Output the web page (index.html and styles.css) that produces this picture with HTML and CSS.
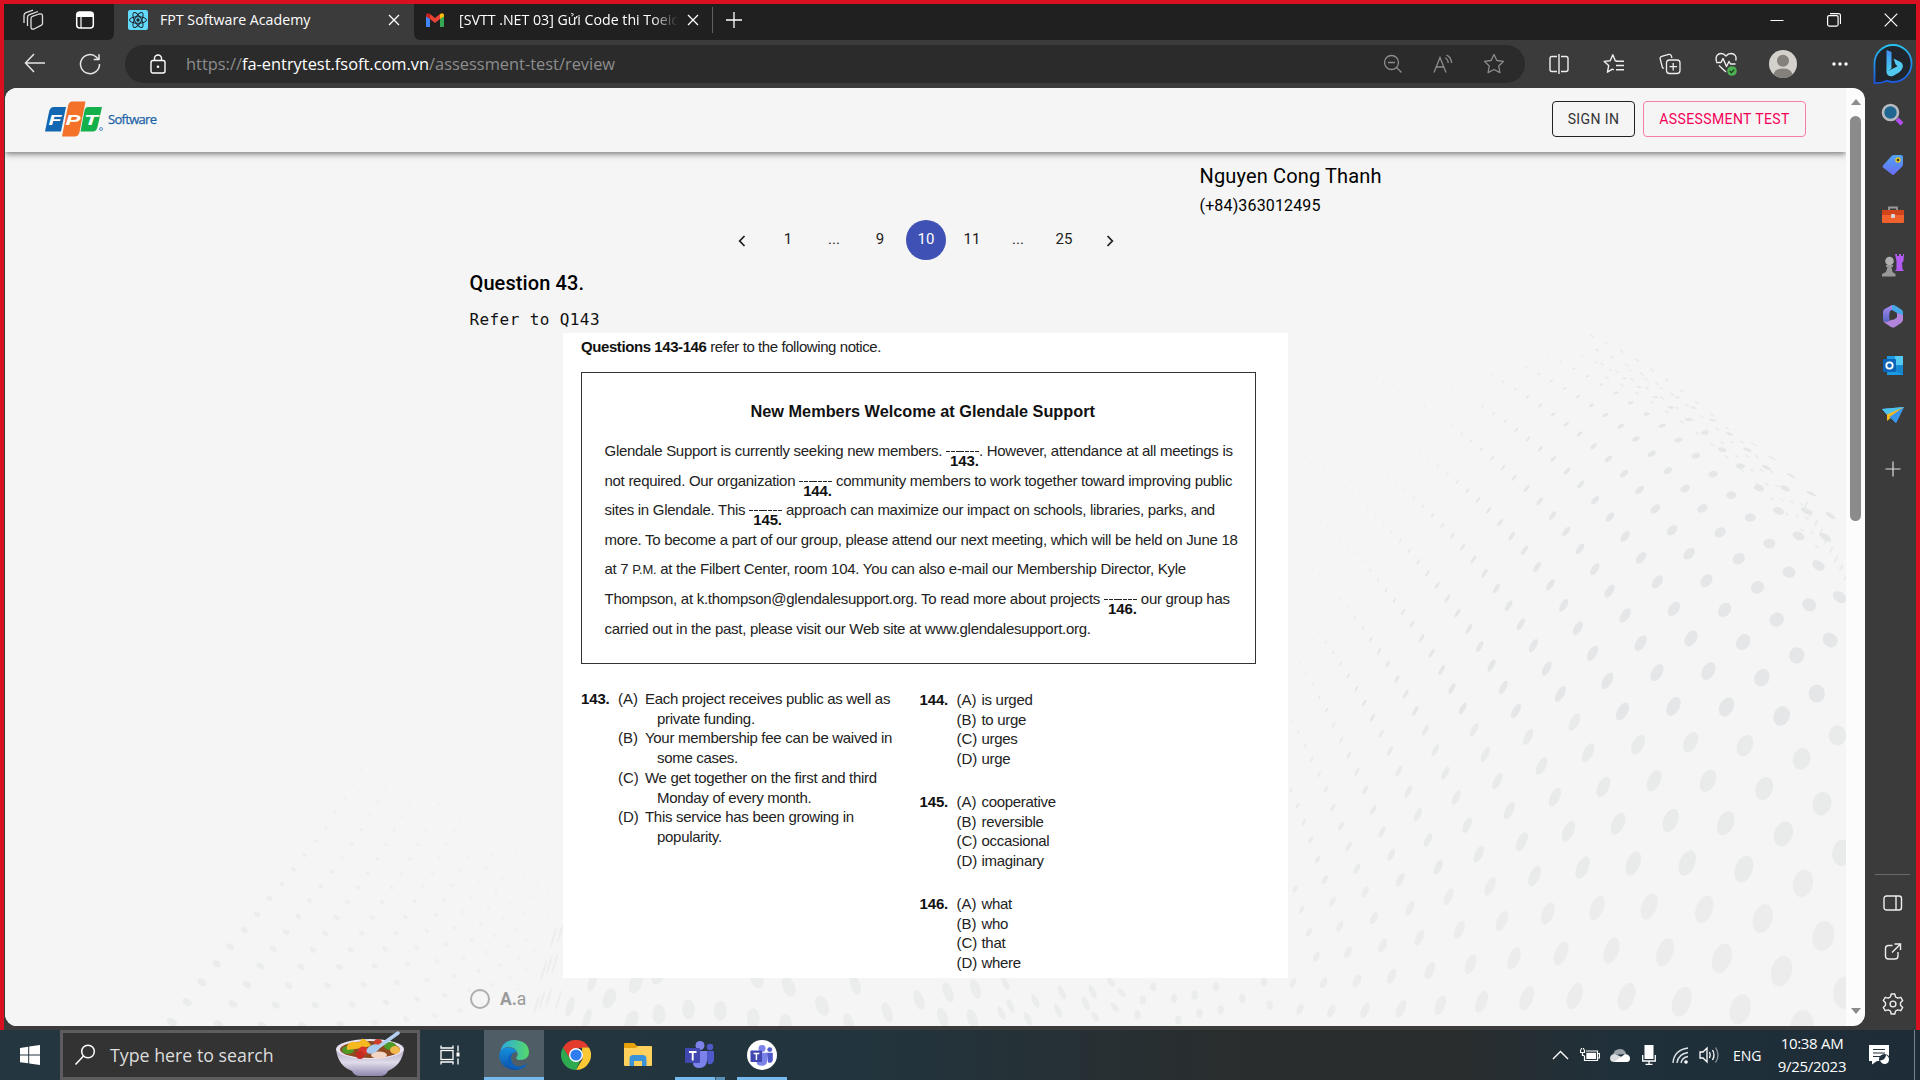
FILE: index.html
```html
<!DOCTYPE html>
<html lang="en">
<head>
<meta charset="utf-8">
<title>FPT Software Academy</title>
<link rel="stylesheet" href="styles.css">
</head>
<body>
<div class="browser">
  <div class="tabstrip">
    <div class="strip-left">
      <svg class="i" width="22" height="22" viewBox="0 0 22 22"><g fill="none" stroke="#ddd" stroke-width="1.3" stroke-linejoin="round"><path d="M9 9.500Q9 8 10.500 7.400L17 5q3.500-.8 3.500 2v7.500q0 1-1 1.700L12 20q-3 .8-3-2z"/><path d="M5.500 17V8.500q0-2 2-2.800L16 2.500M2 14V6.500q0-2 2-2.800L11 1.200"/></g></svg>
      <svg class="i" width="20" height="20" viewBox="0 0 20 20"><rect x="1.700" y="2" width="16.600" height="16" rx="3" fill="none" stroke="#fff" stroke-width="1.500"/><path d="M2 7V4.500Q2 2 4.500 2h11Q18 2 18 4.500V7z" fill="#fff"/><path d="M6 7v11" stroke="#fff" stroke-width="1.200"/></svg>
    </div>
    <div class="tab active">
      <svg width="20" height="20" viewBox="0 0 20 20"><rect width="20" height="20" rx="2" fill="#61dafb"/><g fill="none" stroke="#20232a" stroke-width="1"><ellipse cx="10" cy="10" rx="8.500" ry="3.300"/><ellipse cx="10" cy="10" rx="8.500" ry="3.300" transform="rotate(60 10 10)"/><ellipse cx="10" cy="10" rx="8.500" ry="3.300" transform="rotate(120 10 10)"/></g><circle cx="10" cy="10" r="1.700" fill="#20232a"/></svg>
      <span class="tab-title t1">FPT Software Academy</span>
      <svg width="12" height="12" viewBox="0 0 12 12"><path d="m1 1 10 10M11 1 1 11" stroke="#fff" stroke-width="1.300"/></svg>
    </div>
    <div class="tab idle">
      <svg width="18" height="14" viewBox="0 0 18 14"><path fill="#4285f4" d="M0 2v11q0 1 1 1h3V6z"/><path fill="#34a853" d="M18 2v11q0 1-1 1h-3V6z"/><path fill="#ea4335" d="M4 1 9 5l5-4v5L9 10 4 6z"/><path fill="#c5221f" d="M0 2q.5-3 4-1v5L0 3.500z"/><path fill="#fbbc04" d="M18 2q-.5-3-4-1v5l4-2.500z"/></svg>
      <span class="tab-title t2">[SVTT .NET 03] Gửi Code thi Toeic</span>
      <svg width="12" height="12" viewBox="0 0 12 12"><path d="m1 1 10 10M11 1 1 11" stroke="#fff" stroke-width="1.300"/></svg>
      <i class="tab-sep"></i>
    </div>
    <svg class="newtab" width="18" height="18" viewBox="0 0 18 18"><path d="M9 1v16M1 9h16" stroke="#fff" stroke-width="1.300"/></svg>
    <div class="winctl">
      <svg width="14" height="14" viewBox="0 0 14 14"><path d="M.5 7.500h13" stroke="#fff"/></svg>
      <svg width="14" height="14" viewBox="0 0 14 14"><g fill="none" stroke="#fff" stroke-width="1.200"><rect x=".6" y="2.600" width="10.500" height="10.500" rx="1.500"/><path d="M3 .6h8.500q2 0 2 2V11"/></g></svg>
      <svg width="14" height="14" viewBox="0 0 14 14"><path d="m.7.7 12.600 12.600M13.300.7.7 13.300" stroke="#fff" stroke-width="1.200"/></svg>
    </div>
  </div>

  <div class="toolbar">
    <div class="nav-btns">
      <svg width="22" height="20" viewBox="0 0 22 20"><path d="M10 1 1.500 10l8.500 9M2 10h19" fill="none" stroke="#e6e6e6" stroke-width="1.500"/></svg>
      <svg width="22" height="22" viewBox="0 0 22 22"><path d="M20.500 11a9.500 9.500 0 1 1-3-6.800L19.500 6.500M20 1.200v5.300h-5.300" fill="none" stroke="#e6e6e6" stroke-width="1.500"/></svg>
    </div>
    <div class="address">
      <svg class="lock" width="16" height="20" viewBox="0 0 16 20"><g fill="none" stroke="#fff" stroke-width="1.400"><rect x="1" y="6.500" width="14" height="12.500" rx="2"/><path d="M4.500 6.500V4.500a3.500 3.500 0 0 1 7 0v2"/></g><circle cx="8" cy="12.700" r="1.300" fill="#fff"/></svg>
      <span class="url">https://<b>fa-entrytest.fsoft.com.vn</b>/assessment-test/review</span>
      <div class="addr-icons">
        <svg width="20" height="20" viewBox="0 0 20 20"><g fill="none" stroke="#8d8d8d" stroke-width="1.300"><circle cx="8.500" cy="8.500" r="7"/><path d="m13.500 13.500 5 5M5 8.500h7"/></g></svg>
        <svg width="20" height="20" viewBox="0 0 20 20"><g fill="none" stroke="#8d8d8d" stroke-width="1.300"><path d="m1 18.500 6-15 6 15M3 13h8M12 4q3 1 3.200 5M13.500 1.200Q18 3 18.700 9"/></g></svg>
        <svg width="22" height="22" viewBox="0 0 22 22"><path d="m11 1.500 2.900 6 6.600.9-4.800 4.600 1.200 6.600L11 16.500l-5.900 3.100L6.300 13 1.500 8.400l6.600-.9z" fill="none" stroke="#8d8d8d" stroke-width="1.300" stroke-linejoin="round"/></svg>
      </div>
    </div>
    <div class="tool-icons">
      <svg width="20" height="22" viewBox="0 0 20 22"><path d="M8 3.500H3q-2 0-2 2v11q0 2 2 2h5M12 3.500h5q2 0 2 2v11q0 2-2 2h-5M10 1v20" fill="none" stroke="#eee" stroke-width="1.400"/></svg>
      <svg width="22" height="22" viewBox="0 0 22 22"><path d="M14.500 8.300 12.300 7.800 9.800 1.800 7.200 7.800l-6 .6 4.500 4.200-1.300 6.600 5-3 1.500.8M12.500 8.300H21M13 12.500h8M13 16.700h8" fill="none" stroke="#eee" stroke-width="1.400" stroke-linejoin="round"/></svg>
      <svg width="22" height="22" viewBox="0 0 22 22"><g fill="none" stroke="#eee" stroke-width="1.300"><rect x="7.500" y="7" width="13.500" height="13.500" rx="3"/><path d="M14.200 10v7.500M10.500 13.700H18M5 15.500l-1.500-.8L1.200 6q-.5-2 1.500-2.600l7-2q2-.4 2.600 1.300l.7 2.300"/></g></svg>
      <svg width="22" height="24" viewBox="0 0 22 24"><g fill="none" stroke="#eee" stroke-width="1.400" stroke-linejoin="round"><path d="M1.500 9.500C0 4 3 1.500 6 1.500q3 0 5 2.500 2-2.500 5-2.500c3.500 0 6 2.500 4.700 7M4 13.500l7 6.500M1 10.500h5l2-4 3.500 8 2.500-5 1.500 2.500h5"/></g><circle cx="17" cy="19" r="4.800" fill="#4caf50"/><path d="m14.800 19 1.600 1.600 2.800-3" fill="none" stroke="#16321a" stroke-width="1.200"/></svg>
      <svg width="28" height="28" viewBox="0 0 28 28"><circle cx="14" cy="14" r="14" fill="#d4d1cd"/><circle cx="14" cy="10.800" r="6" fill="#84807c"/><path d="M4.500 24.300Q6 18.500 14 18.500t9.500 5.800A14 14 0 0 1 4.500 24.300z" fill="#84807c"/></svg>
      <svg width="18" height="6" viewBox="0 0 18 6"><g fill="#fff"><circle cx="3" cy="3" r="1.700"/><circle cx="9" cy="3" r="1.700"/><circle cx="15" cy="3" r="1.700"/></g></svg>
    </div>
    <svg class="bing" width="40" height="42" viewBox="0 0 40 42"><defs><linearGradient id="b1" x2="0" y2="1"><stop stop-color="#27c3ee"/><stop offset="1" stop-color="#1b57e0"/></linearGradient><linearGradient id="b2" x2="0" y2="1"><stop stop-color="#3f8cf0"/><stop offset="1" stop-color="#4ad3f2"/></linearGradient></defs><path d="M1.500 40V20.500A18.500 18.500 0 1 1 20 39q-3 0-6-1.200Q8 40.500 1.500 40z" fill="#20242b" stroke="url(#b1)" stroke-width="1.800"/><path d="m13.500 7 5 2v16.500l-5 4z" fill="url(#b2)"/><path d="m20.500 15.500 7 3.500q3 2 2.200 5.500-.8 3-3.700 5l-6 3.500q-3 1-5-.8-1.500-1.500-1.500-3.500l11-5.500-2-2z" fill="#51c9f0"/></svg>
  </div>

  <div class="middle">
    <div class="viewport">
      <div class="page">
        <svg class="dots" id="dots" width="1841" height="938" viewBox="5 88 1841 938"></svg>
        <header class="appbar">
          <div class="logo">
            <svg width="60" height="38" viewBox="45 99 60 38"><path d="M54 106h12l-5 24.500H45l4-19.500q1-5 5-5z" fill="#1267b2"/><path d="M88 106h14l-4.500 20q-1 4.500-5 4.500H80.500l4-21q.8-3.500 3.500-3.500z" fill="#13b04b"/><path d="M72 100.500h13.500L79.500 131q-1 4.500-5 4.500H62l6-30.500q1-4.500 4-4.500z" fill="#f47129"/><g font-family="Liberation Sans" font-weight="700" font-style="italic" font-size="15.500" fill="#fff"><text x="48.500" y="123.500" textLength="13" lengthAdjust="spacingAndGlyphs">F</text><text x="65.500" y="123.500" textLength="15" lengthAdjust="spacingAndGlyphs">P</text><text x="84" y="123.500" textLength="14" lengthAdjust="spacingAndGlyphs">T</text></g><circle cx="101" cy="128" r="1.500" fill="none" stroke="#1267b2" stroke-width=".7"/></svg>
            <span class="logo-text">Software</span>
          </div>
          <div class="app-btns"><button class="btn dark">SIGN IN</button><button class="btn pink">ASSESSMENT TEST</button></div>
        </header>
        <div class="user"><div class="name">Nguyen Cong Thanh</div><div class="phone">(+84)363012495</div></div>
        <nav class="pager">
          <span class="pg"><svg width="8" height="12" viewBox="0 0 8 12"><path d="M6.500 1 1.700 6l4.800 5" fill="none" stroke="#222" stroke-width="1.800"/></svg></span><span class="pg">1</span><span class="pg dim">...</span><span class="pg">9</span><span class="pg on">10</span><span class="pg">11</span><span class="pg dim">...</span><span class="pg">25</span><span class="pg"><svg width="8" height="12" viewBox="0 0 8 12"><path d="m1.500 1 4.800 5-4.800 5" fill="none" stroke="#222" stroke-width="1.800"/></svg></span>
        </nav>
        <section class="question">
          <h1>Question 43.</h1>
          <p class="refer">Refer to Q143</p>
          <div class="sheet">
            <p class="lead"><b>Questions 143-146</b> refer to the following notice.</p>
            <div class="notice">
              <h2>New Members Welcome at Glendale Support</h2>
              <p>Glendale Support is currently seeking new members. <span class="gap"><b>143.</b></span>. However, attendance at all meetings is</p>
              <p>not required. Our organization <span class="gap"><b>144.</b></span> community members to work together toward improving public</p>
              <p>sites in Glendale. This <span class="gap"><b>145.</b></span> approach can maximize our impact on schools, libraries, parks, and</p>
              <p>more. To become a part of our group, please attend our next meeting, which will be held on June 18</p>
              <p class="wide">at 7 <small>P.M.</small> at the Filbert Center, room 104. You can also e-mail our Membership Director, Kyle</p>
              <p>Thompson, at k.thompson@glendalesupport.org. To read more about projects <span class="gap"><b>146.</b></span> our group has</p>
              <p>carried out in the past, please visit our Web site at www.glendalesupport.org.</p>
            </div>
            <div class="answers">
              <div class="q long"><b>143.</b><ul>
                <li><i>(A)</i><span>Each project receives public as well as<br><em>private funding.</em></span></li>
                <li><i>(B)</i><span>Your membership fee can be waived in<br><em>some cases.</em></span></li>
                <li><i>(C)</i><span>We get together on the first and third<br><em>Monday of every month.</em></span></li>
                <li><i>(D)</i><span>This service has been growing in<br><em>popularity.</em></span></li></ul></div>
              <div class="short">
                <div class="q"><b>144.</b><ul><li><i>(A)</i>is urged</li><li><i>(B)</i>to urge</li><li><i>(C)</i>urges</li><li><i>(D)</i>urge</li></ul></div>
                <div class="q"><b>145.</b><ul><li><i>(A)</i>cooperative</li><li><i>(B)</i>reversible</li><li><i>(C)</i>occasional</li><li><i>(D)</i>imaginary</li></ul></div>
                <div class="q"><b>146.</b><ul><li><i>(A)</i>what</li><li><i>(B)</i>who</li><li><i>(C)</i>that</li><li><i>(D)</i>where</li></ul></div>
              </div>
            </div>
          </div>
          <div class="choice"><span class="radio"></span><span><b>A.</b>a</span></div>
        </section>
      </div>
      <div class="scroll">
        <i class="up"></i><i class="thumb"></i><i class="down"></i>
      </div>
    </div>
    <aside class="side">
      <div class="side-top">
        <svg width="24" height="24" viewBox="0 0 24 24"><path d="m16 16 5 5" stroke="#b44df5" stroke-width="4"/><circle cx="9.500" cy="9.500" r="7.500" fill="#1f6690" stroke="#b9bbc0" stroke-width="2.600"/></svg>
        <svg width="24" height="24" viewBox="0 0 24 24"><defs><linearGradient id="tg" x2="0" y2="1"><stop stop-color="#4fa3f5"/><stop offset="1" stop-color="#6a6cf6"/></linearGradient></defs><path d="m2 12.500 8-9Q11 2 13 2h7q2 0 2 2v7q0 2-1.200 3L13 21.500q-1 1-2 0l-9-7q-1-1 0-2z" fill="url(#tg)"/><circle cx="17" cy="7" r="2" fill="#333" stroke="#e8c51c" stroke-width="1.500"/></svg>
        <svg width="24" height="24" viewBox="0 0 24 24"><path d="M8 8V4.500h8V8" fill="none" stroke="#9a9a9a" stroke-width="1.800"/><rect x="1" y="7" width="22" height="13" rx="1" fill="#f0622d"/><path d="M1 7h22v5H1z" fill="#d2441b"/><rect x="10" y="11" width="4" height="4" rx="1" fill="#d8d8d8"/></svg>
        <svg width="24" height="24" viewBox="0 1 24 24"><path d="M14 1h2v2h2V1h2v2h2V1h1l-.5 7-1.500 2 .5 6 1.500 2h-9l1.500-2V8z" fill="#b45cf2"/><circle cx="8.500" cy="8" r="4.300" fill="#b0b0b0"/><path d="M5 12h7v2h-1.500l1 5 3 2v2.500H1V21l4-2 1.500-5H5z" fill="#989898"/></svg>
        <svg width="24" height="24" viewBox="0 0 24 24"><defs><linearGradient id="m1" x2="0" y2="1"><stop stop-color="#a98cf0"/><stop offset="1" stop-color="#5563c4"/></linearGradient></defs><path d="M11 1Q5 4 3 5.500 2 6.500 2 8v8q2 3 5 2l1.500-1V9q0-2 2-3L13 4.500V1z" fill="url(#m1)"/><path d="M11 1q2-.5 4 1l6 4q1 1 1 3v6l-6-4V9l-5-3z" fill="#45a6e8"/><path d="M22 11v5q-.5 2-2 3l-6 4q-2 1-4 0l-6-4q-1.500-1-2-3 2 3 5 1.500L16 13V9z" fill="#b284dc"/><path d="m12 8.500 3.500 2v3.500L12 16l-3.500-2v-3.500z" fill="#3b3b3b"/></svg>
        <svg width="24" height="24" viewBox="0 0 24 24"><rect x="6" y="2" width="16" height="19" fill="#1a9be4"/><path d="M14 2h8v9h-8z" fill="#52c8f3"/><path d="m6 13 16 8V11z" fill="#1786d1"/><rect x="2" y="5" width="13" height="13" rx="1" fill="#0a64b8"/><circle cx="8.500" cy="11.500" r="3.200" fill="none" stroke="#fff" stroke-width="1.800"/></svg>
        <svg width="24" height="24" viewBox="0 0 24 24"><path d="m1 5 22-2-8 16z" fill="#3fb4ee"/><path d="m1 5 22-2L6 11z" fill="#4ec3f0"/><path d="M23 3 6 10.500V17z" fill="#f5b921"/><path d="M23 3 8.500 13 15 19z" fill="#3795ec"/></svg>
        <svg class="plus" width="16" height="16" viewBox="0 0 16 16"><path d="M8 .5v15M.5 8h15" stroke="#ddd" stroke-width="1.200"/></svg>
      </div>
      <div class="side-bottom">
        <svg width="20" height="16" viewBox="0 0 20 16"><g fill="none" stroke="#eee" stroke-width="1.400"><rect x="1" y="1" width="17.500" height="14" rx="2.500"/><path d="M13 1v14"/></g></svg>
        <svg width="18" height="18" viewBox="0 0 18 18"><path d="M8.500 2.500H4.500q-3 0-3 3V13q0 3 3 3H11q3 0 3-3V9M10.500 1h6v6M16.500 1 8 9.500" fill="none" stroke="#eee" stroke-width="1.400"/></svg>
        <svg width="22" height="22" viewBox="-11 -11 22 22"><path d="M-1.800-10h3.600l.8 3 2.200 1.200 3-.9 1.900 3.200L7.500-1.300v2.600L9.700 3.500 7.800 6.700l-3-.9L2.600 7l-.8 3h-3.600l-.8-3-2.200-1.200-3 .9-1.900-3.200 2.200-2.200v-2.600l-2.200-2.200 1.900-3.200 3 .9L-2.600-7z" fill="none" stroke="#eee" stroke-width="1.400" stroke-linejoin="round"/><circle r="2.900" fill="none" stroke="#eee" stroke-width="1.400"/></svg>
      </div>
    </aside>
  </div>
</div>

<div class="taskbar">
  <div class="start"><svg width="20" height="20" viewBox="0 0 20 20"><path d="M0 2.900 8.200 1.700v7.700H0zM9.200 1.600 20 0v9.400H9.200zM0 10.500h8.200v7.800L0 17.200zM9.200 10.500H20V20L9.200 18.400z" fill="#fff"/></svg></div>
  <div class="search">
    <svg width="22" height="22" viewBox="0 0 22 22"><g fill="none" stroke="#fff" stroke-width="1.500"><circle cx="14" cy="7.500" r="6.300"/><path d="m9.500 12-8 8.500"/></g></svg>
    <span>Type here to search</span>
    <svg class="bowl" width="70" height="46" viewBox="0 0 70 46"><defs><linearGradient id="bw" x2="0" y2="1"><stop stop-color="#b3a9c2"/><stop offset=".5" stop-color="#dfdbea"/><stop offset="1" stop-color="#8f86ab"/></linearGradient></defs><path d="M1 18q2 17 16 22 2 5 8 5h20q6 0 8-5 14-6 16-22z" fill="url(#bw)"/><ellipse cx="35" cy="18" rx="34" ry="10" fill="#e7e2f0"/><ellipse cx="35" cy="18.500" rx="30" ry="8.500" fill="#8d4a20"/><g fill="#4e9a28"><ellipse cx="13" cy="19" rx="6" ry="4"/><ellipse cx="55" cy="15" rx="6" ry="4"/></g><path d="M12 15q3-5 8-4t6-2 6 1 3 5-8 2-15 2z" fill="#f6b91f"/><ellipse cx="60" cy="19" rx="5" ry="4" fill="#efb94d"/><circle cx="28" cy="20" r="4.500" fill="#d8352a"/><circle cx="25" cy="24" r="4" fill="#c42a22"/><circle cx="43" cy="12" r="4" fill="#cf3d2c"/><ellipse cx="44" cy="24" rx="8" ry="3.500" fill="#f3d5c3"/><path d="M63 2 42 17" stroke="#b4d0f0" stroke-width="3.500" stroke-linecap="round"/><ellipse cx="38" cy="18" rx="7" ry="4" transform="rotate(-25 38 18)" fill="#a9c9ee"/></svg>
  </div>
  <div class="app view"><svg width="20" height="20" viewBox="0 0 20 20"><g fill="none" stroke="#fff" stroke-width="1.300"><rect x="1" y="5.500" width="12" height="9"/><path d="M1 .5v2.500h12V.5M1 19.500V17h12v2.500M18 .5v6M18 13.500v6"/></g><rect x="16.500" y="7.500" width="3" height="4" fill="#fff"/></svg></div>
  <div class="app current"><svg width="30" height="30" viewBox="0 0 30 30"><defs><linearGradient id="e1" x2="1"><stop stop-color="#2aa9e8"/><stop offset="1" stop-color="#55d868"/></linearGradient><linearGradient id="e2" x2="0" y2="1"><stop stop-color="#1492de"/><stop offset="1" stop-color="#0e4fa8"/></linearGradient></defs><path d="M1 13Q3 0 15.500 0 30 1 30 13q-1 7-8.500 7-5 0-4-3 1.500-1 1-4-2-6-9-6Q3 7.500 1 13z" fill="url(#e1)"/><path d="M0 15.500Q1 8 9 7.500q7 0 9 5-5-1-6 5 0 8 8 9.500 4 0 7-2-5 5-11 5Q1 29 0 15.500z" fill="url(#e2)"/><path d="M12 17q-1 7 6 10 6 0 10-4-1 5-8 6.500Q8 29 9 19q1-5 6-7-3 2-3 5z" fill="#0b62bd"/></svg></div>
  <div class="app"><svg width="30" height="30" viewBox="-15 -15 30 30"><path d="M-13-7.500A15 15 0 0 1 13-7.500L0-6.800-6.500 3.300z" fill="#e53a2e"/><path d="M13-7.500A15 15 0 0 1 0 15l6.500-11L6-7.500z" fill="#fcc934"/><path d="M0 15A15 15 0 0 1-13-7.500L-6 3.800 4 6.500z" fill="#2da94f"/><circle r="7" fill="#fff"/><circle r="5.600" fill="#2f7df0"/></svg></div>
  <div class="app"><svg width="28" height="24" viewBox="0 0 28 24"><path d="M0 1q0-1 1-1h9l3 3h14v5H0z" fill="#e5a00c"/><path d="M0 5h12l2-2h13q1 0 1 1v18q0 1-1 1H1q-1 0-1-1z" fill="#ffd15c"/><path d="M5.500 23v-7q0-4 4-4h9q4 0 4 4v7H18v-5h-8v5z" fill="#3a93d8"/></svg></div>
  <div class="app run stack"><svg class="tm" width="30" height="28" viewBox="0 0 30 28"><use href="#teams"/></svg></div>
  <div class="app run"><svg width="30" height="30" viewBox="0 0 30 30"><defs><g id="teams"><circle cx="15" cy="4.500" r="4.500" fill="#7b83eb"/><circle cx="25" cy="6" r="3.200" fill="#5059c9"/><path d="M21 10h8v9q-1 5-6 4z" fill="#5059c9"/><path d="M9 10h13v10q-1 7-7.500 7T8 22z" fill="#7b83eb"/><rect y="7" width="15" height="15" rx="1.200" fill="#4048b0"/><path d="M4 11h7.500M7.700 11v8.500" stroke="#fff" stroke-width="1.900"/></g></defs><circle cx="15" cy="15" r="15" fill="#fff"/><use href="#teams" transform="translate(3.500 5) scale(.77)"/></svg></div>
  <div class="tray">
    <svg class="chev" width="17" height="10" viewBox="0 0 17 10"><path d="m1 9 7.500-7.500L16 9" fill="none" stroke="#fff" stroke-width="1.400"/></svg>
    <svg class="bat" width="20" height="14" viewBox="0 0 20 14"><g fill="none" stroke="#fff" stroke-width="1.200"><path d="M6 3h11.500v9.500h-13V8M.5 1.500v3h4v-3M2.500 4.500v3h2M1.500 0v1.500M3.500 0v1.500M18 5.500h1.500V10H18"/></g><path d="M6.300 4.800h9.700V11H6.300z" fill="#fff"/></svg>
    <svg class="cloud" width="20" height="13" viewBox="0 0 20 13"><path d="M3 6Q4 0 10 0q5 0 6 5z" fill="#9ca5aa"/><path d="M4 13q-4 0-4-4 .5-4 5-4l9 4 5 3-2 1z" fill="#d8dcde"/><path d="M5 12.500 15 5q5 .5 5 4.500 0 3-3 3.500H5z" fill="#fff"/></svg>
    <svg class="mic" width="14" height="20" viewBox="0 0 14 20"><rect x="2.500" y="0" width="9" height="14" fill="#fff"/><path d="M.7 10v6h12.600v-6M7 16v3M3.500 19.300h7" fill="none" stroke="#fff" stroke-width="1.300"/></svg>
    <svg class="wifi" width="17" height="17" viewBox="0 0 17 17"><g fill="none" stroke="#dfe3e5" stroke-width="1.400"><path d="M1 16Q2 3 16 1M5 16Q6 7 16 5.500M9 16q1-5.500 7-6.500"/></g><circle cx="14" cy="15" r="1.800" fill="#fff"/></svg>
    <svg class="vol" width="20" height="18" viewBox="0 0 20 18"><g fill="none" stroke="#fff" stroke-width="1.300"><path d="M1 6h3l4-4v14l-4-4H1zM10.500 6q1.500 3 0 6M13.500 4q3 5 0 10"/><path d="M16.500 1.500q5 7.500 0 15" stroke="#8a969c"/></g></svg>
    <span class="lang">ENG</span>
    <div class="clock"><span>10:38 AM</span><span>9/25/2023</span></div>
    <svg class="note" width="22" height="20" viewBox="0 0 22 20"><path d="M0 0h20v16H8l-5 3.500V16H0z" fill="#fff"/><path d="M4 4.500h12M4 8h12M4 11.500h7" stroke="#20313a" stroke-width="1.200"/><circle cx="15.500" cy="14.500" r="5.500" fill="#20313a"/><path d="M17 10q-.5 5-6 5.500 2 4 5.500 3.500 3.500-1 3.500-4.500 0-3-3-4.500z" fill="#fff"/></svg>
    <i class="peek"></i>
  </div>
</div>
<script src="dots.js"></script>
</body>
</html>
```
FILE: styles.css
```css
* { box-sizing: border-box; }
body { margin: 0; width: 1920px; height: 1080px; overflow: hidden; display: flex; flex-direction: column; font-family: "Open Sans", "Noto Sans", sans-serif; }
svg { display: block; flex: none; }
p, h1, h2, ul { margin: 0; padding: 0; }

.browser { height: 1030px; border: 4px solid #d91020; border-bottom: 0; background: #3b3b3b; display: flex; flex-direction: column; }
.tabstrip { height: 36px; display: flex; align-items: center; background: #3b3b3b; color: #fff; font-size: 14.200px; }
.strip-left { width: 110px; height: 36px; background: #202020; border-radius: 0 0 6px 0; display: flex; align-items: center; padding: 0 0 4px 18px; gap: 31px; }
.tab { height: 36px; display: flex; align-items: center; padding-bottom: 4px; }
.active { width: 300px; padding-left: 14px; }
.tab-title { white-space: nowrap; overflow: hidden; margin-left: 12px; padding-bottom: 2px; }
.t1 { width: 228px; }
.idle { width: 300px; background: #202020; border-radius: 0 0 0 6px; padding-left: 12px; }
.t2 { width: 219px; margin-left: 15px; margin-right: 9px; -webkit-mask-image: linear-gradient(90deg, #000 88%, transparent 100%); }
.tab-sep { width: 1px; height: 26px; margin-left: 13px; background: #606060; }
.newtab, .winctl { background: #202020; height: 36px; }
.newtab { width: 37px; padding: 7px 8px 11px 11px; }
.winctl { flex: 1; display: flex; align-items: center; justify-content: flex-end; gap: 43px; padding: 0 18px 4px 0; }

.toolbar { height: 48px; display: flex; align-items: center; padding-bottom: 1px; }
.nav-btns { width: 121px; display: flex; gap: 33px; padding-left: 20px; }
.address { width: 1400px; height: 38px; border-radius: 19px; background: #2b2b2b; display: flex; align-items: center; padding-left: 25px; }
.url { margin-left: 20px; font-size: 16.400px; color: #8d8d8d; white-space: nowrap; flex: 1; }
.url b { font-weight: 400; color: #fff; }
.addr-icons { display: flex; align-items: center; gap: 30px; padding-right: 20px; }
.tool-icons { display: flex; align-items: center; margin-left: 24px; width: 326px; gap: 34px; }
.tool-icons svg:nth-child(5) { margin-left: -2px; }
.bing { margin-left: -2px; }

.middle { flex: 1; display: flex; }
.viewport { margin-left: 1px; width: 1860px; height: 938px; border-radius: 12px; overflow: hidden; background: #fcfcfc; display: flex; }
.page { width: 1841px; height: 938px; background: #f5f5f5; position: relative; font-family: Roboto, sans-serif; color: #111; overflow: hidden; }
.dots { position: absolute; left: 0; top: 0; }
.page > header, .page > .user, .page > nav, .page > section { position: relative; }
.appbar { height: 64px; background: #f5f5f5; box-shadow: 0 2px 4px -1px rgba(0,0,0,.3), 0 4px 5px rgba(0,0,0,.16), 0 1px 10px rgba(0,0,0,.13); display: flex; align-items: center; justify-content: space-between; padding: 0 40px 2px; }
.logo { display: flex; align-items: center; gap: 3px; }
.logo-text { font: 13px/18px "Open Sans", sans-serif; color: #1a62a8; letter-spacing: -.7px; -webkit-text-stroke: .25px #1a62a8; }
.app-btns { display: flex; gap: 8px; }
.btn { height: 36px; border-radius: 4px; border: 1px solid #222; background: none; font: 14px/16px Roboto, sans-serif; letter-spacing: .4px; padding: 0 0 1px; color: #333; }
.btn.dark { width: 83px; }
.btn.pink { width: 163px; border-color: #f87da8; color: #f50057; }
.user { margin-left: 1194.500px; padding-top: 12px; height: 67px; color: #000; }
.name { font-size: 20px; line-height: 24px; letter-spacing: .15px; }
.phone { font-size: 16px; line-height: 24px; margin-top: 6px; letter-spacing: .15px; }
.pager { display: flex; gap: 6px; margin-left: 717px; height: 42px; padding-top: 1px; }
.pg { width: 40px; height: 40px; border-radius: 50%; display: flex; align-items: center; justify-content: center; font-size: 15px; line-height: 38px; color: #222; padding-bottom: 2px; }
.pg svg { margin-top: 3px; }
.pg.on { background: #3f51b5; color: #fff; }
.question { padding-left: 464.500px; }
h1 { font-size: 20px; font-weight: 500; line-height: 24px; color: #000; padding-top: 10px; letter-spacing: .1px; }
.refer { font: 16px/22px "DejaVu Sans Mono", monospace; letter-spacing: .4px; color: #111; padding-top: 14px; height: 38px; }
.sheet { width: 725px; height: 645px; margin-left: 93.500px; background: #fff; padding-left: 18px; font-family: "Liberation Sans", sans-serif; color: #222; font-size: 15px; letter-spacing: -.3px; }
.sheet p { white-space: nowrap; }
.sheet b { color: #111; }
.lead { height: 39px; line-height: 28px; }
.sheet .lead { letter-spacing: -.42px; }
.notice { width: 675px; height: 292px; border: 1.500px solid #333; padding: 25px 0 0 22.500px; }
h2 { font-size: 16.300px; line-height: 26px; letter-spacing: 0; color: #111; margin: 0 0 12px; text-align: center; padding-right: 14px; }
.notice p { line-height: 29.600px; height: 29.600px; letter-spacing: -.285px; }
.notice p.wide { letter-spacing: -.27px; }
.notice small { font-size: 13px; }
.gap { display: inline-block; position: relative; width: 33px; height: 1px; background: repeating-linear-gradient(90deg, #222 0 4px, transparent 4px 4.800px); vertical-align: 4px; }
.gap b { position: absolute; left: 4px; top: 2px; line-height: 16px; letter-spacing: -.1px; }
.answers { display: flex; padding-top: 25px; line-height: 19.700px; }
.q { display: flex; }
.q > b { width: 37px; letter-spacing: -.15px; }
.long { width: 338.500px; }
ul { list-style: none; }
li { display: flex; white-space: nowrap; }
li i { font-style: normal; width: 27px; letter-spacing: 0; }
em { font-style: normal; padding-left: 12px; }
.short { display: flex; flex-direction: column; gap: 23.200px; padding-top: 1px; }
.short li i { width: 25px; }
.choice { display: flex; align-items: center; gap: 10px; height: 42px; padding-left: .5px; font-size: 17.500px; color: #9a9a9a; }
.radio { width: 20px; height: 20px; border: 2px solid #adadad; border-radius: 50%; }
.scroll { width: 19px; display: flex; flex-direction: column; align-items: center; }
.up { border: 5.500px solid transparent; border-bottom: 6px solid #8b8b8b; border-top: 0; margin-top: 11px; }
.thumb { width: 11px; height: 405px; border-radius: 6px; background: #8b8b8b; margin-top: 11px; }
.down { border: 5.500px solid transparent; border-top: 6px solid #8b8b8b; border-bottom: 0; margin-top: auto; margin-bottom: 12px; }

.side { width: 51px; display: flex; flex-direction: column; justify-content: space-between; align-items: center; padding-left: 4px; }
.side-top { display: flex; flex-direction: column; align-items: center; padding-top: 15px; gap: 26.200px; }
.side-top .plus { margin-top: 7px; }
.side-bottom { width: 35px; border-top: 1px solid #6a6a6a; height: 156px; padding-top: 20px; display: flex; flex-direction: column; align-items: center; gap: 32px; }

.taskbar { height: 50px; display: flex; color: #fff; background: linear-gradient(90deg, #24363f 0, #22343d 45%, #2a2d2d 66%, #292d2e 76%, #20303a 84%, #1d2c36 100%); }
.start { width: 60px; display: flex; align-items: center; justify-content: center; }
.search { width: 360px; border: 3px solid #5d5d5d; background: #333; display: flex; align-items: center; padding-left: 11px; font-size: 17.800px; color: #ddd; }
.search span { margin-left: 14px; width: 225px; white-space: nowrap; }
.bowl { margin-top: -2px; }
.app { width: 60px; display: flex; align-items: center; justify-content: center; margin-right: 2px; border-bottom: 3px solid transparent; padding-top: 3px; }
.view { margin: 0 4px 0 0; }
.current { background: #4f5e66; border-bottom-color: #76b9ed; }
.run { position: relative; border: 0; padding: 0; }
.run::after { content: ""; position: absolute; left: 5px; right: 5px; bottom: 0; height: 3px; background: #76b9ed; }
.stack::after { background: linear-gradient(90deg, #76b9ed 40px, #35566c 40px 41px, #5890b8 41px); }
.tray { flex: 1; display: flex; align-items: center; font-size: 15px; }
.chev { margin-left: 758px; }
.bat { margin-left: 11px; }
.cloud { margin-left: 10px; }
.mic { margin-left: 12px; }
.wifi { margin-left: 16px; }
.vol { margin-left: 10px; }
.lang { width: 30px; margin-left: 14px; font-size: 14px; }
.clock { width: 80px; margin-left: 9px; text-align: center; display: flex; flex-direction: column; font-size: 15px; line-height: 23px; letter-spacing: -.3px; }
.note { margin-left: 17px; }
.peek { width: 1px; height: 50px; background: #7a858b; margin-left: 23px; }
```
FILE: dots.js
```javascript
(function () {
  var NS = "http://www.w3.org/2000/svg";
  var svg = document.getElementById("dots");

  function dot(x, y, m, r, fill, alpha) {
    var c = document.createElementNS(NS, "circle");
    c.setAttribute("r", r);
    c.setAttribute("fill", fill);
    c.setAttribute("opacity", alpha);
    c.setAttribute("transform", "matrix(" + m.join(" ") + " " + x + " " + y + ")");
    svg.appendChild(c);
  }

  // Large sphere: each row runs from the rim down to the lower left.
  var SX = 0.3699, SY = 0.5102;
  var rows = [
    [[1527,1475],[1411,1540]],
    [[1570,1290],[1469,1364],[1356,1433],[1244,1508]],
    [[1520,1201],[1414,1261],[1305,1330],[1195,1408],[1086,1493]],
    [[1560,1050],[1465,1105],[1361,1164],[1254,1233],[1147,1312],[1041,1396],[937,1483]],
    [[1507,971],[1410,1017],[1309,1075],[1205,1143],[1101,1221],[998,1306],[896,1393],[797,1482]],
    [[1541,855],[1451,889],[1356,933],[1257,991],[1157,1060],[1056,1138],[955,1222],[857,1309],[760,1398],[667,1486]],
    [[1487,784],[1397,814],[1303,858],[1207,915],[1110,984],[1011,1060],[914,1144],[818,1230],[724,1320],[633,1408],[545,1493]],
    [[1513,700],[1431,715],[1343,744],[1252,788],[1158,845],[1064,914],[968,989],[874,1072],[780,1159],[688,1247],[600,1335],[515,1420],[433,1500]],
    [[1456,638],[1376,651],[1291,681],[1202,725],[1111,781],[1019,848],[926,924],[833,1005],[743,1092],[654,1179],[568,1267],[485,1352],[405,1432],[327,1507]],
    [[1475,583],[1402,580],[1323,595],[1240,625],[1153,668],[1065,723],[975,790],[885,864],[796,945],[707,1031],[620,1118],[537,1204],[456,1287],[377,1368],[302,1443],[230,1510]],
    [[1488,540],[1423,531],[1348,531],[1271,544],[1190,573],[1106,615],[1020,670],[933,736],[845,810],[758,890],[671,974],[588,1060],[506,1147],[428,1229],[351,1310],[278,1383],[208,1452],[139,1511]],
    [[1436,497],[1366,487],[1295,486],[1220,500],[1142,526],[1060,569],[976,623],[891,688],[805,761],[721,840],[638,923],[555,1008],[476,1093],[400,1176],[325,1254],[254,1329],[184,1396],[118,1456],[54,1508]],
    [[1382,462],[1315,446],[1245,443],[1171,459],[1095,487],[1015,527],[933,581],[851,645],[767,716],[685,795],[604,877],[525,960],[447,1045],[373,1126],[301,1205],[230,1278],[162,1345],[98,1405],[35,1456]],
    [[1330,427],[1264,411],[1196,411],[1124,423],[1049,452],[972,490],[892,543],[811,605],[731,676],[651,753],[572,834],[494,918],[420,1000],[347,1081],[276,1160],[208,1232],[142,1297],[78,1357],[18,1406]],
    [[1280,400],[1215,380],[1148,378],[1077,392],[1005,419],[930,458],[852,510],[774,571],[695,641],[618,717],[540,797],[465,879],[393,961],[321,1041],[252,1117],[186,1188],[121,1254],[59,1312],[0,1362]],
    [[1232,374],[1170,353],[1103,352],[1033,364],[962,390],[888,429],[813,479],[737,540],[661,608],[585,683],[511,762],[437,843],[366,923],[297,1002],[230,1078],[165,1149],[102,1214],[41,1272]],
    [[1180,352],[1118,329],[1057,328],[991,341],[921,365],[848,404],[776,453],[702,512],[627,580],[553,653],[480,731],[410,810],[340,890],[273,968],[208,1042],[143,1112],[83,1176],[23,1232]],
    [[1130,330],[1075,308],[1015,308],[948,319],[880,343],[810,380],[739,429],[667,487],[595,554],[523,626],[452,703],[383,781],[316,860],[250,936],[186,1010],[124,1077],[65,1141]],
    [[1085,312],[1030,290],[971,288],[908,300],[842,324],[774,361],[704,409],[633,466],[564,530],[494,602],[425,677],[357,753],[291,831],[228,907],[165,980],[105,1047],[47,1109]],
    [[1040,295],[988,272],[931,271],[869,283],[805,307],[738,342],[671,390],[603,446],[535,510],[466,580],[399,653],[333,729],[268,806],[206,880],[145,950],[86,1018],[30,1079]]
  ];
  var i, j;
  // Rows toward the top left keep shrinking by a constant ratio.
  for (i = rows.length; i < 38; i++) {
    var a = rows[i - 1], b = rows[i - 2], next = [];
    for (j = 0; j < Math.min(a.length, 17); j++) {
      next.push([a[j][0] - (b[j][0] - a[j][0]) * 0.972, a[j][1] - (b[j][1] - a[j][1]) * 0.935]);
    }
    rows.push(next);
  }
  // Rows start at different rim points, so pair them by nearest point below.
  rows.forEach(function (row, n) {
    row.forEach(function (p, k) {
      var q = row[k + 1] || row[k - 1], s = row[k + 1] ? 1 : -1;
      var ux = (q[0] - p[0]) * SX * s, uy = (q[1] - p[1]) * SY * s;
      var vx = Math.max(5, 20 - n * 0.55), vy = 14;
      var other = rows[n + 1] || rows[n - 1], best = 1e9;
      other.forEach(function (o) {
        var dx = (p[0] - o[0]) * (rows[n + 1] ? 1 : -1), dy = (p[1] - o[1]) * (rows[n + 1] ? 1 : -1);
        var d = Math.hypot(dx, dy);
        if (dx > 8 && dy > -5 && d < best) { best = d; vx = dx * SX; vy = dy * SY; }
      });
      var x = 1280 + p[0] * SX, y = 240 + p[1] * SY;
      if (x < 1289 || x > 1850 || y < 242) return;
      var r = Math.max(0.03, 0.245 - n * 0.0088);
      var alpha = Math.min(1, Math.max(0.1, (y - 235) / 140));
      dot(x, y, [ux, uy, vx, vy], r, y > 880 ? "#ececec" : y > 720 ? "#e9eaea" : "#e4e6e7", alpha);
    });
  });

  // Far-side dashes that show through close to the rim.
  for (i = 0; i < 15; i++) {
    for (j = 0; j < 4; j++) {
      var bx = 1592 + i * 15 + j * 5, by = 336 + i * 7 + i * i * 0.36 + j * 14;
      dot(bx, by, [2.8, 2, -0.7, 0.9], 0.75, "#e6e8e8", 0.8);
    }
  }
  for (i = 0; i < 9; i++) dot(1806 + i * 5, 505 + i * 9, [3, -6, 1, 1], 0.6, "#e4e6e6", 0.8);

  // Small sphere in the lower left corner.
  var edge = [[465,1267],[506,1206],[546,1147],[585,1091],[622,1040],[660,990],[695,942],[729,895],[762,852],[794,808],[824,765],[853,723],[881,682],[906,639],[931,597],[955,553],[977,508],[999,464],[1018,415],[1036,370],[1054,322],[1069,272]];
  edge.forEach(function (p, k) {
    var x = p[0], y = p[1], t = 1 - k / 24;
    for (j = 0; j < 12; j++) {
      var s = Math.pow(t, 1.9) * (1 - j * 0.07);
      if (x < 1530) dot(x * SX, 600 + y / 3, [4.4 * s + 0.45, 2.6 * s, -1.4 * s, 2.8 * s + 0.7], 1, "#e9ebeb", Math.max(0.2, 1 - k * 0.03 - j * 0.05));
      x += (126 - k * 2.5) * (1 - j * 0.065);
      y += 6 + k * 0.1 - j * 3;
    }
  });
  [[1450,1215],[1465,1200],[1483,1192],[1510,1200],[1543,1220],[1500,1090],[1485,1095],[1470,1110],[1515,1000],[1497,1010]].forEach(function (p) {
    dot(p[0] * SX, 600 + p[1] / 3, [1.2, 0, -3, 10], 1, "#ebecec", 0.9);
  });

  // Band under the sheet.
  [[250,935,-1],[332,940,-1],[375,915,-1],[560,925,1],[621,950,1],[747,945,1],[282,985,-1],[867,990,1],[922,967,1],[974,957,1],[1030,940,1],[208,1010,-1],[376,1033,0],[432,1018,0],[492,1022,0],[684,1007,1],[807,1027,1],[1040,1007,1],[1087,993,1],[1137,967,1],[1182,1000,1],[1195,965,1],[1230,937,1],[240,1045,-1],[324,1052,-1],[554,1045,0],[615,1062,0],[735,1060,1],[912,1042,1],[968,1047,1],[1023,1030,1],[1073,1046,1],[1130,1022,1],[1200,1040,1],[1237,1012,1],[1250,968,1],[1280,1035,0],[1290,990,0],[1310,950,0],[1349,985,0],[1357,1050,0],[1388,975,0],[1397,1030,0],[1428,950,0],[1437,1020,0],[1478,985,0],[1519,935,0],[1530,1005,0]].forEach(function (p) {
    var w = p[0] < 260 ? 4 : p[0] < 700 ? 6.5 : p[0] < 1000 ? 5 : 3.2;
    var h = p[0] < 1000 ? 10 : p[0] < 1200 ? 7 : 4.5;
    dot(460 + p[0] * 0.5293, 670 + p[1] / 3, [w, 0, p[2] * 2.6, h], 1, "#ebecec", 1);
  });
})();
```
